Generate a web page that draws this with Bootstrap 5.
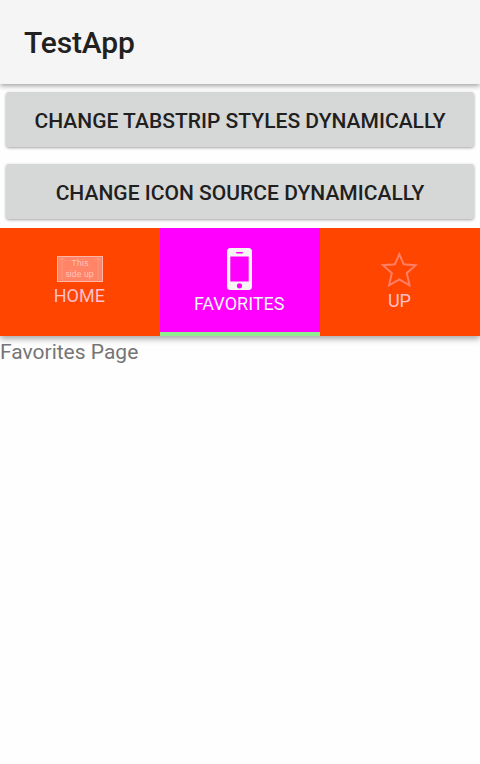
<!DOCTYPE html>
<html lang="en">
<head>
<meta charset="utf-8">
<meta name="viewport" content="width=device-width, initial-scale=1">
<title>TestApp</title>
<link href="https://cdn.jsdelivr.net/npm/bootstrap@5.3.0/dist/css/bootstrap.min.css" rel="stylesheet">
<style>
body { font-family: Roboto, "Liberation Sans", sans-serif; background: #fefefe; color: #757575; overflow: hidden; }
.action-bar { height: 84px; background: #f5f5f5; box-shadow: 0 2px 5px rgba(0,0,0,.36); padding: 2px 24px 0; }
.action-title { font-size: 30px; font-weight: 500; line-height: 36px; letter-spacing: -.15px; color: #212121; }
.actions { padding: 8px 6px 9px; gap: 17px; }
.btn-raised { --bs-btn-border-radius: 3px; --bs-btn-bg: #d6d8d7; --bs-btn-color: #202020; --bs-btn-hover-bg: #cbcdcc; height: 55px; padding: 2px 0 0; border: 0; font-size: 21px; line-height: 26px; font-weight: 500; letter-spacing: .02px; box-shadow: 0 1px 3px rgba(0,0,0,.36); white-space: nowrap; }
.tab-strip { height: 108px; background: #ff4500; box-shadow: 0 3px 6px rgba(0,0,0,.34); clip-path: inset(0 0 -12px 0); flex-wrap: nowrap; }
.tab-strip .nav-link { height: 108px; padding: 0; color: #ffc0cb; font-size: 18px; line-height: 22px; border-radius: 0; border-bottom: 4px solid transparent; }
.tab-strip .nav-link.active { background: #f0f; color: #f5f5f5; border-bottom-color: #90ee90; }
.tab-strip svg { display: block; }
.tab-strip .tab-home { padding-top: 28px; }
.tab-strip .tab-fav { padding: 20px 1px 0 0; }
.tab-strip .tab-up { padding: 22px 1px 0 0; }
.tab-home span { margin-right: 1px; }
.page-text { font-size: 21px; line-height: 25px; padding-top: 4px; position: relative; z-index: 2; }
</style>
<script src="https://cdn.jsdelivr.net/npm/bootstrap@5.3.0/dist/js/bootstrap.bundle.min.js"></script>
</head>
<body>
<header class="action-bar d-flex align-items-center position-relative">
  <h1 class="action-title m-0">TestApp</h1>
</header>
<div class="actions d-grid">
  <button class="btn btn-raised" type="button">CHANGE TABSTRIP STYLES DYNAMICALLY</button>
  <button class="btn btn-raised" type="button">CHANGE ICON SOURCE DYNAMICALLY</button>
</div>
<nav class="tab-strip nav nav-fill position-relative">
  <a class="nav-link tab-home w-100 d-flex flex-column align-items-center" href="#">
    <svg width="46" height="29" viewBox="0 0 46 29">
      <rect x=".5" y=".5" width="45" height="25" fill="#ff8468" stroke="#ffb6a6"/>
      <path d="M5 24V2M2 5l3-3 3 3M41 24V2M38 5l3-3 3 3" fill="none" stroke="#ff9c84" stroke-width="1"/>
      <g fill="#ffc4ba" font-family="Liberation Sans, sans-serif" font-size="8.5" text-anchor="middle">
        <text x="23" y="10" textLength="17">This</text>
        <text x="22.5" y="21" textLength="28">side up</text>
      </g>
    </svg>
    <span>HOME</span>
  </a>
  <a class="nav-link tab-fav active w-100 d-flex flex-column align-items-center" href="#">
    <svg width="25" height="45" viewBox="0 0 25 45">
      <path fill="#f5f5f5" fill-rule="evenodd" d="M3.5 0h18A3.5 3.5 0 0 1 25 3.5v35a3.5 3.5 0 0 1-3.500 3.500h-18A3.500 3.500 0 0 1 0 38.500v-35A3.500 3.500 0 0 1 3.500 0ZM3.300 8.500v25h18.400v-25ZM9.700 4a.7.7 0 0 0 0 1.400h5.600a.7.7 0 0 0 0-1.400ZM12.500 35.200a2.600 2.600 0 1 0 0 5.200 2.600 2.600 0 0 0 0-5.200Z"/>
    </svg>
    <span>FAVORITES</span>
  </a>
  <a class="nav-link tab-up w-100 d-flex flex-column align-items-center" href="#">
    <svg width="37" height="40" viewBox="0 0 37 40">
      <path d="M18.300 4.200l4.400 10 11.900 1-8.800 7.900 2.700 12.200-10.200-5.900-10.200 5.900 2.700-12.200-8.800-7.900 11.900-1Z" fill="none" stroke="#ff7f66" stroke-width="2"/>
    </svg>
    <span>UP</span>
  </a>
</nav>
<main class="page-text">Favorites Page</main>
</body>
</html>
